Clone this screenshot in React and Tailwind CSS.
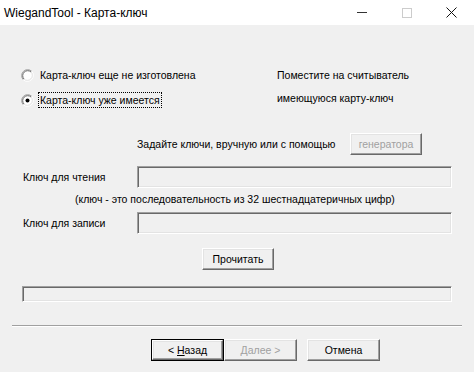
import React from "react";

function Radio({ checked }) {
  return (
    <svg width="13" height="13" viewBox="0 0 13 13" className="shrink-0">
      <circle cx="6.5" cy="6.5" r="5" fill="#ffffff" />
      <path d="M2.26 10.74 A6 6 0 0 1 10.74 2.26" fill="none" stroke="#a0a0a0" strokeWidth="1" />
      <path d="M10.74 2.26 A6 6 0 0 1 2.26 10.74" fill="none" stroke="#ffffff" strokeWidth="1" />
      <path d="M2.97 10.03 A5 5 0 0 1 10.03 2.97" fill="none" stroke="#696969" strokeWidth="1" />
      <path d="M10.03 2.97 A5 5 0 0 1 2.97 10.03" fill="none" stroke="#e3e3e3" strokeWidth="1" />
      {checked && <circle cx="6.5" cy="6.5" r="2" fill="#000000" />}
    </svg>
  );
}

function Btn({ children, w = "w-[73px]", disabled, isDefault }) {
  const inner = (
    <div
      className={`h-full w-full flex items-center justify-center border border-t-white border-l-white border-r-[#696969] border-b-[#696969] shadow-[inset_-1px_-1px_0_#a0a0a0,inset_1px_1px_0_#e3e3e3] bg-[#f0f0f0] ${
        disabled ? "text-[#a0a0a0]" : "text-black"
      }`}
    >
      {children}
    </div>
  );
  return (
    <div className={`${w} h-[22px] shrink-0 ${isDefault ? "border border-black" : ""}`}>{inner}</div>
  );
}

function Sunken({ className }) {
  return (
    <div
      className={`border border-t-[#a0a0a0] border-l-[#a0a0a0] border-r-white border-b-white shadow-[inset_1px_1px_0_#696969,inset_-1px_-1px_0_#e3e3e3] bg-[#f0f0f0] ${className}`}
    />
  );
}

export default function App() {
  return (
    <div className="w-[474px] h-[372px] bg-[#f0f0f0] overflow-hidden text-[10.5px] leading-[14px] text-black font-['Liberation_Sans',Arial,sans-serif]">
      {/* Title bar */}
      <div className="h-[25px] bg-white flex items-center">
        <div className="pl-[4px] text-[12px] text-black">WiegandTool - Карта-ключ</div>
        <div className="ml-auto flex h-full">
          <div className="w-[45px] h-full flex items-center justify-center">
            <div className="w-[10px] h-[1px] bg-[#333]" />
          </div>
          <div className="w-[45px] h-full flex items-center justify-center">
            <div className="w-[10px] h-[10px] border border-[#cccccc]" />
          </div>
          <div className="w-[45px] h-full flex items-center justify-center">
            <svg width="11" height="11" viewBox="0 0 11 11">
              <path d="M0.5 0.5 L10.5 10.5 M10.5 0.5 L0.5 10.5" stroke="#111" strokeWidth="1" />
            </svg>
          </div>
        </div>
      </div>

      {/* Radio section */}
      <div className="flex mt-[40px] h-[45px]">
        <div className="w-[277px] pl-[21px] flex flex-col gap-[5px]">
          <div className="h-[20px] flex items-center">
            <Radio />
            <span className="ml-[6px]">Карта-ключ еще не изготовлена</span>
          </div>
          <div className="h-[20px] flex items-center">
            <Radio checked />
            <span className="ml-[4px] px-[1px] border border-dotted border-black leading-[14px]">
              Карта-ключ уже имеется
            </span>
          </div>
        </div>
        <div className="flex flex-col leading-[23px] -mt-[1px]">
          <span>Поместите на считыватель</span>
          <span>имеющуюся карту-ключ</span>
        </div>
      </div>

      {/* Generator row */}
      <div className="flex items-center h-[22px] mt-[23px]">
        <span className="pl-[137px] w-[350px] shrink-0">Задайте ключи, вручную или с помощью</span>
        <Btn w="w-[72px]" disabled>
          генератора
        </Btn>
      </div>

      {/* Read key */}
      <div className="flex items-center mt-[11px]">
        <span className="pl-[23px] w-[137px] shrink-0">Ключ для чтения</span>
        <Sunken className="w-[315px] h-[22px]" />
      </div>

      <div className="mt-[4px] pl-[75px] h-[14px]">(ключ - это последовательность из 32 шестнадцатеричных цифр)</div>

      {/* Write key */}
      <div className="flex items-center mt-[6px]">
        <span className="pl-[23px] w-[137px] shrink-0">Ключ для записи</span>
        <Sunken className="w-[315px] h-[22px]" />
      </div>

      <div className="mt-[14px] pl-[202px]">
        <Btn w="w-[72px]">Прочитать</Btn>
      </div>

      <div className="mt-[16px] pl-[22px]">
        <Sunken className="w-[430px] h-[16px]" />
      </div>

      <div className="mt-[23px] ml-[12px] w-[450px] h-[2px] border-t border-t-[#a0a0a0] border-b border-b-white" />

      <div className="mt-[12px] pl-[151px] flex">
        <Btn isDefault>
          &lt; <u className="ml-[3px]">Н</u>азад
        </Btn>
        <Btn disabled>
          <u>Д</u>алее &gt;
        </Btn>
        <div className="w-[10px]" />
        <Btn>Отмена</Btn>
      </div>
    </div>
  );
}
